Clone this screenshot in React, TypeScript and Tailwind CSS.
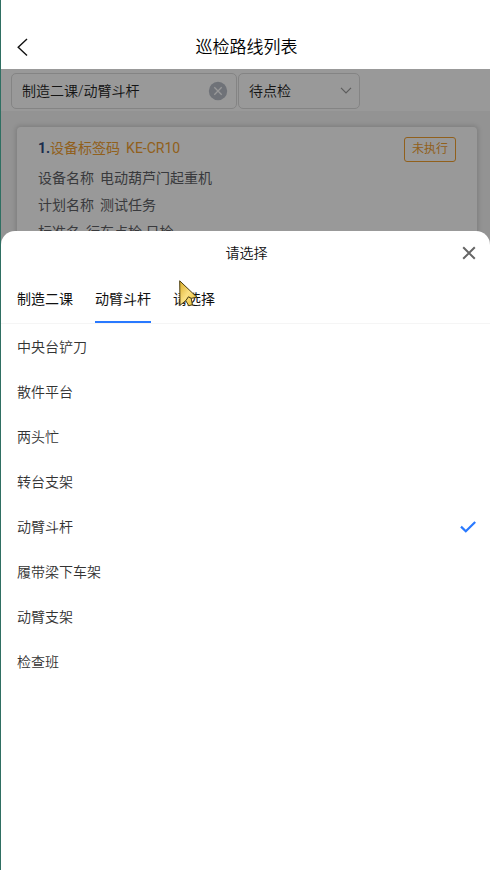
const tabs = ["制造二课", "动臂斗杆", "请选择"];

const options = [
    "中央台铲刀",
    "散件平台",
    "两头忙",
    "转台支架",
    "动臂斗杆",
    "履带梁下车架",
    "动臂支架",
    "检查班",
];

const details = [
    { label: "设备名称", value: "电动葫芦门起重机" },
    { label: "计划名称", value: "测试任务" },
    { label: "标准名", value: "行车点检 日检" },
];

function Header() {
    return (
        <header className="grid h-[69px] grid-cols-[48px_1fr_46px] items-center bg-white pt-6">
            <button type="button" aria-label="返回" className="flex h-11 items-center pl-4">
                <svg className="h-5 w-3" viewBox="0 0 12 20" fill="none" stroke="#111" strokeWidth="1.4">
                    <path d="M10 2 1.2 10.2l8.8 8.2" />
                </svg>
            </button>
            <h1 className="text-center text-[17px] leading-6 font-[350] text-black">巡检路线列表</h1>
        </header>
    );
}

function Filters() {
    return (
        <div className="flex gap-px bg-white px-[10px] pt-1 pb-[2px]">
            <div className="flex h-9 w-[226px] items-center rounded-[5px] border border-[#dcdcdc] pr-2 pl-[10px]">
                <input
                    aria-label="路线"
                    readOnly
                    value="制造二课/动臂斗杆"
                    className="min-w-0 flex-1 text-sm font-[350] text-[#222] outline-none"
                />
                <button type="button" aria-label="清除">
                    <svg className="size-5" viewBox="0 0 20 20" fill="none">
                        <circle cx="10" cy="10" r="9.2" fill="#b9bfc9" />
                        <path d="m6.3 6.3 7.4 7.4m0-7.4-7.4 7.4" stroke="#fff" strokeWidth="1.3" />
                    </svg>
                </button>
            </div>
            <div className="relative h-9 w-[122px]">
                <select
                    aria-label="状态"
                    className="h-full w-full appearance-none rounded-[5px] border border-[#dcdcdc] pl-[10px] text-sm font-[350] text-[#222]"
                >
                    <option>待点检</option>
                </select>
                <svg
                    className="pointer-events-none absolute top-[14px] right-2 h-[7px] w-3"
                    viewBox="0 0 12 7"
                    fill="none"
                    stroke="#999"
                    strokeWidth="1.2"
                >
                    <path d="m1 .8 5 5 5-5" />
                </svg>
            </div>
        </div>
    );
}

function RouteCard() {
    return (
        <article className="mx-4 mt-4 mr-[13px] rounded-[4px] bg-white pt-[10px] pr-[21px] pb-4 pl-[21px] shadow-[0_0_4px_2px_rgba(0,0,0,0.12)]">
            <div className="flex items-start justify-between">
                <h2 className="flex text-sm leading-[22px] text-[#f2a030]">
                    <b className="font-bold text-[#2f4a80]">1.</b>
                    <span className="mr-[6px]">设备标签码</span>
                    <span>KE-CR10</span>
                </h2>
                <span className="h-[25px] rounded-[3px] border border-[#f2a030] px-[7px] text-xs leading-[23px] text-[#f2a030]">
                    未执行
                </span>
            </div>
            <dl className="mt-[2px] text-sm text-[#606266]">
                {details.map((row) => (
                    <div key={row.label} className="flex h-[27px] items-center gap-[6px]">
                        <dt>{row.label}</dt>
                        <dd>{row.value}</dd>
                    </div>
                ))}
            </dl>
        </article>
    );
}

function Cursor() {
    return (
        <svg className="pointer-events-none absolute top-[6px] left-[6px] h-7 w-5" viewBox="0 0 20 28">
            <defs>
                <linearGradient id="gold" x1="0" y1="0" x2="1" y2="1">
                    <stop offset="0" stopColor="#d9ac28" />
                    <stop offset="0.5" stopColor="#fbe184" />
                    <stop offset="1" stopColor="#e8b81c" />
                </linearGradient>
            </defs>
            <path d="M.7.8 18 17.3l-5.8 1 1.2 6.4-3.6 1.1-3-5.1L1 25.3Z" fill="url(#gold)" stroke="#4b3d12" strokeLinejoin="round" />
            <path d="m6.8 20.7 2.6-3.9 2.8 1.5" fill="none" stroke="#3f340f" />
        </svg>
    );
}

function PickerSheet() {
    return (
        <section role="dialog" aria-label="请选择" className="flex-1 rounded-t-[14px] bg-white">
            <div className="grid h-[43px] grid-cols-[48px_1fr_46px] items-center">
                <h2 className="col-start-2 text-center text-sm font-[350] text-[#111]">请选择</h2>
                <button type="button" aria-label="关闭" className="flex justify-end pr-[14px]">
                    <svg className="size-[14px]" viewBox="0 0 14 14" fill="none" stroke="#666" strokeWidth="2">
                        <path d="m1.2 1.2 11.6 11.6m0-11.6L1.2 12.8" />
                    </svg>
                </button>
            </div>
            <div role="tablist" className="flex h-[50px] gap-[22px] border-b border-[#f5f5f5] px-4">
                {tabs.map((tab, i) => (
                    <button
                        key={tab}
                        type="button"
                        role="tab"
                        aria-selected={i === 1}
                        className={
                            i === 1
                                ? "relative border-b-2 border-[#2979ff] pt-[2px] text-sm text-[#111]"
                                : "relative border-b-2 border-transparent pt-[2px] text-sm text-[#111]"
                        }
                    >
                        {tab}
                        {i === 2 && <Cursor />}
                    </button>
                ))}
            </div>
            <ul>
                {options.map((option) => (
                    <li key={option}>
                        <button
                            type="button"
                            className="flex h-[45px] w-full items-center justify-between pr-[14px] pl-4 text-sm font-[350] text-[#333]"
                        >
                            {option}
                            {option === "动臂斗杆" && (
                                <svg className="h-3 w-4" viewBox="0 0 16 12" fill="none" stroke="#2979ff" strokeWidth="2.2">
                                    <path d="m1 5.6 4.8 4.7L15.2 1" />
                                </svg>
                            )}
                        </button>
                    </li>
                ))}
            </ul>
        </section>
    );
}

export default function App() {
    return (
        <div className="flex min-h-screen flex-col border-l border-[#2f6f62] bg-white font-['Roboto','Noto_Sans_CJK_SC',sans-serif]">
            <Header />
            <main className="relative flex-1 bg-[#f5f5f5]">
                <Filters />
                <RouteCard />
                <div className="absolute inset-0 flex flex-col bg-black/40 pt-[162px]">
                    <PickerSheet />
                </div>
            </main>
        </div>
    );
}
